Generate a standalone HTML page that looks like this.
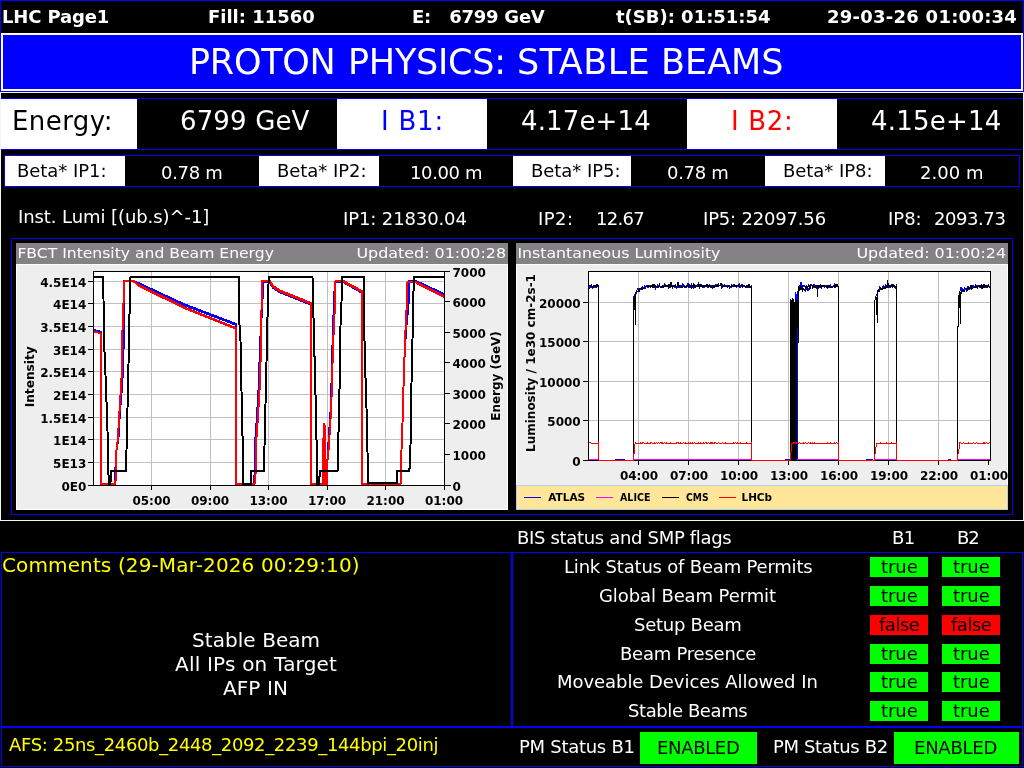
<!DOCTYPE html>
<html><head><meta charset="utf-8"><title>LHC Page1</title>
<style>
html,body{margin:0;padding:0;background:#000;}
body{width:1024px;height:768px;position:relative;overflow:hidden;font-family:"DejaVu Sans","Liberation Sans",sans-serif;}
.b{position:absolute;box-sizing:border-box;}
.t{position:absolute;white-space:pre;will-change:transform;}
svg{position:absolute;overflow:hidden;}
svg text{font-family:"DejaVu Sans","Liberation Sans",sans-serif;}
</style></head><body>

<div class="b" style="left:0px;top:0px;width:1024px;height:92px;border:1px solid #0000ff;"></div>
<span class="t" style="left:2px;top:8px;font-size:18px;line-height:18px;color:#fff;letter-spacing:-0.144px;font-weight:bold;">LHC Page1</span>
<span class="t" style="left:208px;top:8px;font-size:18px;line-height:18px;color:#fff;letter-spacing:-0.020px;font-weight:bold;">Fill: 11560</span>
<span class="t" style="left:412px;top:8px;font-size:18px;line-height:18px;color:#fff;letter-spacing:-0.232px;font-weight:bold;">E:   6799 GeV</span>
<span class="t" style="left:616px;top:8px;font-size:18px;line-height:18px;color:#fff;letter-spacing:-0.012px;font-weight:bold;">t(SB): 01:51:54</span>
<span class="t" style="left:827px;top:8px;font-size:18px;line-height:18px;color:#fff;letter-spacing:0.250px;font-weight:bold;">29-03-26 01:00:34</span>
<div class="b" style="left:1px;top:33px;width:1022px;height:58px;background:#0000ff;border:2px solid #fff;"></div>
<div>
<span class="t" style="left:189px;top:45px;font-size:35px;line-height:35px;color:#fff;letter-spacing:-0.262px;">PROTON</span>
<span class="t" style="left:348px;top:45px;font-size:35px;line-height:35px;color:#fff;letter-spacing:-0.252px;">PHYSICS:</span>
<span class="t" style="left:517px;top:45px;font-size:35px;line-height:35px;color:#fff;letter-spacing:0.450px;">STABLE</span>
<span class="t" style="left:661px;top:45px;font-size:35px;line-height:35px;color:#fff;">BEAMS</span>
</div>
<div class="b" style="left:0px;top:92px;width:1024px;height:429px;border:1px solid #f4f4f4;"></div>
<div class="b" style="left:1px;top:98px;width:1022px;height:52px;border:1px solid #0000ff;border-left:none;border-right:none;"></div>
<div class="b" style="left:1px;top:99px;width:136px;height:50px;background:#fff;"></div>
<div class="b" style="left:337px;top:99px;width:150px;height:50px;background:#fff;"></div>
<div class="b" style="left:687px;top:99px;width:150px;height:50px;background:#fff;"></div>
<span class="t" style="left:12px;top:108px;font-size:26px;line-height:26px;color:#000;letter-spacing:0.435px;">Energy:</span>
<span class="t" style="left:180px;top:108px;font-size:26px;line-height:26px;color:#fff;letter-spacing:0.144px;">6799 GeV</span>
<span class="t" style="left:381px;top:108px;font-size:26px;line-height:26px;color:#0000ff;letter-spacing:0.778px;">I B1:</span>
<span class="t" style="left:521px;top:108px;font-size:26px;line-height:26px;color:#fff;letter-spacing:0.134px;">4.17e+14</span>
<span class="t" style="left:731px;top:108px;font-size:26px;line-height:26px;color:#ff0000;letter-spacing:0.653px;">I B2:</span>
<span class="t" style="left:871px;top:108px;font-size:26px;line-height:26px;color:#fff;letter-spacing:0.205px;">4.15e+14</span>
<div class="b" style="left:4px;top:155px;width:1016px;height:32px;border:1px solid #0000ff;"></div>
<div class="b" style="left:5px;top:156px;width:120px;height:30px;background:#fff;"></div>
<span class="t" style="left:17px;top:162px;font-size:18px;line-height:18px;color:#000;letter-spacing:-0.051px;">Beta* IP1:</span>
<span class="t" style="left:161px;top:164px;font-size:18px;line-height:18px;color:#fff;letter-spacing:-0.302px;">0.78 m</span>
<div class="b" style="left:259px;top:156px;width:120px;height:30px;background:#fff;"></div>
<span class="t" style="left:277px;top:162px;font-size:18px;line-height:18px;color:#000;letter-spacing:-0.051px;">Beta* IP2:</span>
<span class="t" style="left:410px;top:164px;font-size:18px;line-height:18px;color:#fff;letter-spacing:-0.369px;">10.00 m</span>
<div class="b" style="left:513px;top:156px;width:118px;height:30px;background:#fff;"></div>
<span class="t" style="left:531px;top:162px;font-size:18px;line-height:18px;color:#000;letter-spacing:-0.051px;">Beta* IP5:</span>
<span class="t" style="left:667px;top:164px;font-size:18px;line-height:18px;color:#fff;letter-spacing:-0.302px;">0.78 m</span>
<div class="b" style="left:765px;top:156px;width:120px;height:30px;background:#fff;"></div>
<span class="t" style="left:783px;top:162px;font-size:18px;line-height:18px;color:#000;letter-spacing:-0.051px;">Beta* IP8:</span>
<span class="t" style="left:920px;top:164px;font-size:18px;line-height:18px;color:#fff;letter-spacing:0.016px;">2.00 m</span>
<span class="t" style="left:18px;top:208px;font-size:18px;line-height:18px;color:#fff;letter-spacing:-0.082px;">Inst. Lumi [(ub.s)^-1]</span>
<span class="t" style="left:343px;top:210px;font-size:18px;line-height:18px;color:#fff;letter-spacing:-0.119px;">IP1: 21830.04</span>
<div>
<span class="t" style="left:538px;top:210px;font-size:18px;line-height:18px;color:#fff;letter-spacing:0.427px;">IP2:</span>
<span class="t" style="left:596px;top:210px;font-size:18px;line-height:18px;color:#fff;letter-spacing:-0.705px;">12.67</span>
</div>
<span class="t" style="left:703px;top:210px;font-size:18px;line-height:18px;color:#fff;letter-spacing:-0.183px;">IP5: 22097.56</span>
<div>
<span class="t" style="left:888px;top:210px;font-size:18px;line-height:18px;color:#fff;">IP8:</span>
<span class="t" style="left:934px;top:210px;font-size:18px;line-height:18px;color:#fff;letter-spacing:-0.434px;">2093.73</span>
</div>
<div class="b" style="left:11px;top:238px;width:1002px;height:277px;border:1px solid #0000ff;"></div>
<svg style="left:16px;top:243px;will-change:transform" width="492" height="267" viewBox="16 243 492 267" shape-rendering="crispEdges">
<rect x="16" y="243" width="492" height="267" fill="#fff"/>
<rect x="17" y="265" width="490" height="244" fill="#eeeeee"/>
<rect x="16" y="243" width="492" height="21" fill="#848284"/>
<text x="17.4" y="258" font-size="14" font-weight="normal" text-anchor="start" fill="#fff" textLength="256.5" lengthAdjust="spacingAndGlyphs">FBCT Intensity and Beam Energy</text>
<text x="356.4" y="258" font-size="14" font-weight="normal" text-anchor="start" fill="#fff" textLength="149.7" lengthAdjust="spacingAndGlyphs">Updated: 01:00:28</text>
<rect x="93" y="271" width="351" height="214" fill="#fff"/>
<rect x="151" y="271" width="1" height="214" fill="#c0c0c0"/>
<rect x="210" y="271" width="1" height="214" fill="#c0c0c0"/>
<rect x="268" y="271" width="1" height="214" fill="#c0c0c0"/>
<rect x="327" y="271" width="1" height="214" fill="#c0c0c0"/>
<rect x="385" y="271" width="1" height="214" fill="#c0c0c0"/>
<rect x="93" y="462" width="351" height="1" fill="#c0c0c0"/>
<rect x="93" y="439" width="351" height="1" fill="#c0c0c0"/>
<rect x="93" y="417" width="351" height="1" fill="#c0c0c0"/>
<rect x="93" y="394" width="351" height="1" fill="#c0c0c0"/>
<rect x="93" y="371" width="351" height="1" fill="#c0c0c0"/>
<rect x="93" y="349" width="351" height="1" fill="#c0c0c0"/>
<rect x="93" y="326" width="351" height="1" fill="#c0c0c0"/>
<rect x="93" y="303" width="351" height="1" fill="#c0c0c0"/>
<rect x="93" y="281" width="351" height="1" fill="#c0c0c0"/>
<clipPath id="c1"><rect x="93" y="271" width="352" height="215"/></clipPath>
<g clip-path="url(#c1)">
<polyline points="93.0,329.5 101.0,332.0 101.0,484.0 114.5,484.0 116.5,450.0 118.5,437.0 120.0,411.0 122.0,387.0 123.0,369.0 124.0,330.0 124.5,281.0 134.0,281.0 184.0,304.2 236.0,324.0 236.0,484.0 253.5,484.0 254.5,475.0 255.5,437.0 256.5,423.0 258.0,400.0 259.0,380.0 260.0,345.0 262.5,300.0 263.0,282.0 270.0,282.0 273.0,287.0 280.0,291.5 311.0,304.0 311.0,484.0 322.6,484.0 323.5,438.0 324.5,423.0 325.3,484.0 326.4,484.0 327.4,461.0 328.0,450.0 329.0,435.0 330.5,412.0 331.5,383.0 332.5,345.0 334.0,300.0 335.0,281.5 343.5,281.5 362.0,292.0 362.0,484.0 400.5,484.0 401.5,450.0 402.5,423.0 403.5,387.0 404.5,357.0 406.0,330.0 408.5,305.0 409.0,281.0 416.0,281.0 444.0,294.0" fill="none" stroke="#0000ff" stroke-width="2" stroke-linejoin="miter"/>
<polyline points="134.0,281.8 184.0,305.0 236.0,324.8" fill="none" stroke="#0000ff" stroke-width="2" stroke-linejoin="miter"/>
<polyline points="270.0,282.8 273.0,287.8 280.0,292.3 311.0,304.8" fill="none" stroke="#0000ff" stroke-width="2" stroke-linejoin="miter"/>
<polyline points="343.5,282.3 362.0,292.8" fill="none" stroke="#0000ff" stroke-width="2" stroke-linejoin="miter"/>
<polyline points="416.0,281.8 444.0,294.8" fill="none" stroke="#0000ff" stroke-width="2" stroke-linejoin="miter"/>
<polyline points="93.0,331.0 101.0,333.5 101.0,484.0 115.4,484.0 116.5,450.0 118.0,437.6 119.5,411.0 121.0,387.0 122.0,369.0 122.5,330.0 123.0,315.0 124.0,292.0 124.5,281.0 134.0,281.0 139.0,285.0 184.0,307.2 236.0,328.0 236.0,484.0 254.5,484.0 255.5,475.0 256.5,437.0 257.5,423.0 259.0,400.0 260.0,380.0 261.0,345.0 261.5,310.0 262.0,281.0 270.0,281.0 273.0,286.0 280.0,290.5 311.0,303.0 311.0,484.0 322.6,484.0 323.5,438.0 324.5,423.0 325.3,484.0 327.0,484.0 327.4,461.0 328.5,450.0 329.5,435.0 331.0,412.0 332.0,383.0 333.0,345.0 334.5,315.0 335.5,281.0 343.5,281.0 362.0,291.0 362.0,484.0 400.5,484.0 401.5,450.0 402.5,423.0 403.5,387.0 404.5,357.0 405.5,330.0 407.0,300.0 407.5,282.0 416.0,282.0 444.0,296.0" fill="none" stroke="#ff0000" stroke-width="2" stroke-linejoin="miter"/>
<polyline points="134.0,281.8 139.0,285.8 184.0,308.0 236.0,328.8" fill="none" stroke="#ff0000" stroke-width="2" stroke-linejoin="miter"/>
<polyline points="270.0,281.8 273.0,286.8 280.0,291.3 311.0,303.8" fill="none" stroke="#ff0000" stroke-width="2" stroke-linejoin="miter"/>
<polyline points="343.5,281.8 362.0,291.8" fill="none" stroke="#ff0000" stroke-width="2" stroke-linejoin="miter"/>
<polyline points="416.0,282.8 444.0,296.8" fill="none" stroke="#ff0000" stroke-width="2" stroke-linejoin="miter"/>
<polyline points="93.0,277.0 103.0,277.0 103.5,299.0 104.0,340.0 106.0,387.0 107.5,431.0 108.5,475.0 109.0,484.0 110.5,484.0 110.6,471.0 126.0,471.0 126.5,450.0 127.5,408.0 128.5,364.0 129.3,321.0 130.2,290.0 130.5,277.0 238.8,277.0 239.0,322.0 240.3,330.0 241.0,368.0 242.0,413.0 243.0,457.0 243.5,484.0 251.0,484.0 251.2,471.0 264.0,471.0 264.5,446.0 265.5,404.0 266.5,362.0 267.5,318.0 268.5,285.0 268.6,277.0 312.4,277.0 313.0,284.0 313.7,330.0 315.0,372.0 316.0,416.0 317.0,462.0 317.5,484.0 319.4,484.0 319.6,471.0 337.5,471.0 338.0,454.0 339.0,411.0 340.0,368.0 340.5,326.0 342.0,290.0 342.2,277.0 363.9,277.0 364.0,318.0 365.0,363.0 366.5,408.0 367.5,452.0 368.0,483.0 396.7,483.0 397.0,471.0 409.3,471.0 410.0,463.0 411.0,427.0 411.5,383.0 412.5,340.0 413.0,298.0 414.0,285.0 414.1,277.0 444.0,277.0" fill="none" stroke="#000" stroke-width="2" stroke-linejoin="miter"/>
</g>
<rect x="93" y="271" width="357" height="1" fill="#000"/>
<rect x="93" y="271" width="1" height="215" fill="#000"/>
<rect x="88" y="485" width="363" height="1" fill="#000"/>
<rect x="444" y="271" width="1" height="215" fill="#000"/>
<rect x="88" y="485" width="5" height="1" fill="#000"/>
<text x="86.3" y="491" font-size="12" font-weight="bold" text-anchor="end" fill="#000">0E0</text>
<rect x="88" y="462" width="5" height="1" fill="#000"/>
<text x="86.3" y="468" font-size="12" font-weight="bold" text-anchor="end" fill="#000">5E13</text>
<rect x="88" y="439" width="5" height="1" fill="#000"/>
<text x="86.3" y="445" font-size="12" font-weight="bold" text-anchor="end" fill="#000">1E14</text>
<rect x="88" y="417" width="5" height="1" fill="#000"/>
<text x="86.3" y="423" font-size="12" font-weight="bold" text-anchor="end" fill="#000">1.5E14</text>
<rect x="88" y="394" width="5" height="1" fill="#000"/>
<text x="86.3" y="400" font-size="12" font-weight="bold" text-anchor="end" fill="#000">2E14</text>
<rect x="88" y="371" width="5" height="1" fill="#000"/>
<text x="86.3" y="377" font-size="12" font-weight="bold" text-anchor="end" fill="#000">2.5E14</text>
<rect x="88" y="349" width="5" height="1" fill="#000"/>
<text x="86.3" y="355" font-size="12" font-weight="bold" text-anchor="end" fill="#000">3E14</text>
<rect x="88" y="326" width="5" height="1" fill="#000"/>
<text x="86.3" y="332" font-size="12" font-weight="bold" text-anchor="end" fill="#000">3.5E14</text>
<rect x="88" y="303" width="5" height="1" fill="#000"/>
<text x="86.3" y="309" font-size="12" font-weight="bold" text-anchor="end" fill="#000">4E14</text>
<rect x="88" y="281" width="5" height="1" fill="#000"/>
<text x="86.3" y="287" font-size="12" font-weight="bold" text-anchor="end" fill="#000">4.5E14</text>
<text x="452.5" y="491" font-size="12" font-weight="bold" text-anchor="start" fill="#000">0</text>
<rect x="445" y="454" width="5" height="1" fill="#000"/>
<text x="452.5" y="460" font-size="12" font-weight="bold" text-anchor="start" fill="#000">1000</text>
<rect x="445" y="423" width="5" height="1" fill="#000"/>
<text x="452.5" y="429" font-size="12" font-weight="bold" text-anchor="start" fill="#000">2000</text>
<rect x="445" y="393" width="5" height="1" fill="#000"/>
<text x="452.5" y="399" font-size="12" font-weight="bold" text-anchor="start" fill="#000">3000</text>
<rect x="445" y="362" width="5" height="1" fill="#000"/>
<text x="452.5" y="368" font-size="12" font-weight="bold" text-anchor="start" fill="#000">4000</text>
<rect x="445" y="332" width="5" height="1" fill="#000"/>
<text x="452.5" y="338" font-size="12" font-weight="bold" text-anchor="start" fill="#000">5000</text>
<rect x="445" y="301" width="5" height="1" fill="#000"/>
<text x="452.5" y="307" font-size="12" font-weight="bold" text-anchor="start" fill="#000">6000</text>
<text x="452.5" y="277" font-size="12" font-weight="bold" text-anchor="start" fill="#000">7000</text>
<rect x="151" y="486" width="1" height="4" fill="#000"/>
<text x="151.5" y="505" font-size="12" font-weight="bold" text-anchor="middle" fill="#000">05:00</text>
<rect x="210" y="486" width="1" height="4" fill="#000"/>
<text x="210.0" y="505" font-size="12" font-weight="bold" text-anchor="middle" fill="#000">09:00</text>
<rect x="268" y="486" width="1" height="4" fill="#000"/>
<text x="268.5" y="505" font-size="12" font-weight="bold" text-anchor="middle" fill="#000">13:00</text>
<rect x="327" y="486" width="1" height="4" fill="#000"/>
<text x="327.0" y="505" font-size="12" font-weight="bold" text-anchor="middle" fill="#000">17:00</text>
<rect x="385" y="486" width="1" height="4" fill="#000"/>
<text x="385.5" y="505" font-size="12" font-weight="bold" text-anchor="middle" fill="#000">21:00</text>
<rect x="444" y="486" width="1" height="4" fill="#000"/>
<text x="444.0" y="505" font-size="12" font-weight="bold" text-anchor="middle" fill="#000">01:00</text>
<text x="0" y="0" font-size="12" font-weight="bold" text-anchor="start" fill="#000" textLength="61" lengthAdjust="spacingAndGlyphs" transform="translate(34.3,407.3) rotate(-90)">Intensity</text>
<text x="0" y="0" font-size="12" font-weight="bold" text-anchor="middle" fill="#000" transform="translate(500,376) rotate(-90)">Energy (GeV)</text>
</svg>
<svg style="left:516px;top:243px;will-change:transform" width="492" height="267" viewBox="516 243 492 267" shape-rendering="crispEdges">
<rect x="516" y="243" width="492" height="267" fill="#fff"/>
<rect x="517" y="265" width="490" height="244" fill="#eeeeee"/>
<rect x="516" y="243" width="492" height="21" fill="#848284"/>
<text x="517.4" y="258" font-size="14" font-weight="normal" text-anchor="start" fill="#fff" textLength="203" lengthAdjust="spacingAndGlyphs">Instantaneous Luminosity</text>
<text x="856.4" y="258" font-size="14" font-weight="normal" text-anchor="start" fill="#fff" textLength="149.7" lengthAdjust="spacingAndGlyphs">Updated: 01:00:24</text>
<rect x="588" y="271" width="402" height="189" fill="#fff"/>
<rect x="638" y="271" width="1" height="189" fill="#c0c0c0"/>
<rect x="688" y="271" width="1" height="189" fill="#c0c0c0"/>
<rect x="738" y="271" width="1" height="189" fill="#c0c0c0"/>
<rect x="788" y="271" width="1" height="189" fill="#c0c0c0"/>
<rect x="838" y="271" width="1" height="189" fill="#c0c0c0"/>
<rect x="888" y="271" width="1" height="189" fill="#c0c0c0"/>
<rect x="938" y="271" width="1" height="189" fill="#c0c0c0"/>
<rect x="588" y="420" width="402" height="1" fill="#c0c0c0"/>
<rect x="588" y="381" width="402" height="1" fill="#c0c0c0"/>
<rect x="588" y="341" width="402" height="1" fill="#c0c0c0"/>
<rect x="588" y="302" width="402" height="1" fill="#c0c0c0"/>
<clipPath id="c2"><rect x="588" y="271" width="403" height="190"/></clipPath>
<g clip-path="url(#c2)">
<polyline points="588.0,287.0 588.0,287.7 588.5,285.5 589.0,286.6 589.5,287.4 590.0,288.4 590.5,286.2 591.0,285.1 591.5,284.7 592.0,287.6 592.5,288.0 593.0,287.3 593.5,286.8 594.0,287.9 594.5,286.4 595.0,284.7 595.5,287.1 596.0,287.8 596.5,286.0 597.0,284.6 597.5,285.2 598.0,284.7 598.5,286.0 598.5,460.6 615.0,460.6 615.0,459.5 624.0,459.5 624.0,460.6 633.5,460.6 633.5,298.0 634.5,295.0 636.0,294.0 636.5,290.9 637.0,290.0 637.5,288.9 638.0,289.2 638.5,288.6 639.0,289.3 639.5,288.5 640.0,290.2 640.5,289.0 641.0,290.0 641.5,288.9 642.0,288.7 642.5,288.6 643.0,286.6 643.5,289.0 644.0,287.1 644.5,286.3 645.0,288.9 645.5,287.5 646.0,287.0 646.5,285.4 647.0,285.5 647.5,286.6 648.0,288.2 648.5,286.3 649.0,285.2 649.5,285.8 650.0,285.3 650.5,286.6 651.0,287.3 651.5,285.9 652.0,285.8 652.5,284.8 653.0,287.7 653.5,286.2 654.0,287.4 654.5,285.5 655.0,285.9 655.5,287.7 656.0,285.8 656.5,286.9 657.0,286.1 657.5,284.6 658.0,287.6 658.5,287.3 659.0,285.4 659.5,285.1 660.0,286.8 660.5,286.9 661.0,287.0 661.5,286.4 662.0,287.1 662.5,287.5 663.0,285.6 663.5,285.4 664.0,286.8 664.5,284.8 665.0,286.5 665.5,285.3 666.0,284.6 666.5,286.1 667.0,286.7 667.5,286.1 668.0,285.4 668.5,286.9 669.0,284.7 669.5,286.8 670.0,285.4 670.5,287.6 671.0,284.7 671.5,285.9 672.0,285.2 672.5,287.0 673.0,285.3 673.5,285.6 674.0,285.3 674.5,287.0 675.0,287.6 675.5,285.2 676.0,285.9 676.5,287.6 677.0,285.9 677.5,287.7 678.0,284.8 678.5,285.9 679.0,287.4 679.5,287.8 680.0,285.7 680.5,287.6 681.0,284.7 681.5,285.8 682.0,285.7 682.5,284.6 683.0,285.7 683.5,285.0 684.0,285.3 684.5,287.2 685.0,286.0 685.5,286.1 686.0,287.5 686.5,285.8 687.0,284.7 687.5,287.2 688.0,283.1 688.5,287.5 689.0,287.0 689.5,285.7 690.0,287.7 690.5,285.4 691.0,285.6 691.5,284.6 692.0,287.5 692.5,285.5 693.0,286.1 693.5,287.7 694.0,285.4 694.5,286.2 695.0,285.2 695.5,287.0 696.0,287.1 696.5,285.6 697.0,285.8 697.5,284.9 698.0,287.0 698.5,281.9 699.0,285.6 699.5,287.4 700.0,285.4 700.5,284.9 701.0,286.9 701.5,285.3 702.0,286.6 702.5,287.0 703.0,286.7 703.5,287.3 704.0,286.4 704.5,287.0 705.0,285.4 705.5,285.1 706.0,286.5 706.5,285.9 707.0,286.2 707.5,287.2 708.0,287.8 708.5,286.1 709.0,287.3 709.5,284.7 710.0,285.0 710.5,287.7 711.0,287.6 711.5,287.4 712.0,285.4 712.5,287.6 713.0,286.5 713.5,285.3 714.0,285.1 714.5,285.4 715.0,286.7 715.5,284.6 716.0,286.8 716.5,285.6 717.0,287.1 717.5,284.8 718.0,285.9 718.5,286.6 719.0,285.1 719.5,285.9 720.0,285.6 720.5,285.6 721.0,285.7 721.5,287.4 722.0,285.8 722.5,286.9 723.0,284.6 723.5,286.0 724.0,285.9 724.5,286.1 725.0,284.6 725.5,286.7 726.0,284.9 726.5,285.8 727.0,285.1 727.5,286.3 728.0,284.9 728.5,287.2 729.0,285.2 729.5,287.6 730.0,286.1 730.5,287.6 731.0,287.5 731.5,287.2 732.0,287.1 732.5,285.9 733.0,287.3 733.5,285.3 734.0,286.3 734.5,285.0 735.0,286.9 735.5,284.7 736.0,287.0 736.5,287.3 737.0,286.5 737.5,286.6 738.0,285.9 738.5,286.0 739.0,286.0 739.5,284.7 740.0,286.2 740.5,287.0 741.0,286.1 741.5,286.1 742.0,285.0 742.5,284.9 743.0,286.2 743.5,286.6 744.0,286.9 744.5,286.2 745.0,286.2 745.5,287.6 746.0,287.3 746.5,286.9 747.0,285.2 747.5,286.2 748.0,287.5 748.5,287.1 749.0,284.8 749.5,287.0 750.0,287.5 750.5,287.2 751.0,286.2 751.2,286.0 751.2,460.6 785.0,460.6 785.0,459.5 790.0,459.5 790.0,460.6 795.8,460.6 795.8,292.0 796.4,298.0 796.8,460.6 797.0,460.6 797.0,300.0 798.5,286.0 799.0,289.9 799.5,285.4 800.0,290.5 800.5,285.6 801.0,282.1 801.5,289.9 802.0,290.0 802.5,286.7 803.0,285.6 803.5,286.2 804.0,285.4 804.5,286.7 805.0,287.2 805.5,290.8 806.0,290.1 806.5,285.2 807.0,287.6 807.5,287.1 808.0,288.2 808.5,290.2 809.0,289.9 809.5,285.0 810.0,289.6 810.5,284.5 811.0,286.2 811.5,285.1 812.0,285.7 812.5,285.4 813.0,285.5 813.5,286.9 814.0,284.9 814.5,284.8 815.0,286.9 815.5,286.6 816.0,285.9 816.5,287.5 817.0,285.5 817.5,285.4 818.0,286.2 818.5,287.5 819.0,286.1 819.5,287.1 820.0,286.7 820.5,285.6 821.0,287.4 821.5,287.0 822.0,286.0 822.5,286.5 823.0,286.1 823.5,285.3 824.0,285.5 824.5,287.4 825.0,285.0 825.5,285.6 826.0,285.0 826.5,285.1 827.0,287.0 827.5,287.8 828.0,285.8 828.5,287.2 829.0,286.0 829.5,286.7 830.0,285.2 830.5,284.6 831.0,287.2 831.5,286.2 832.0,286.1 832.5,286.6 833.0,287.0 833.5,286.0 834.0,287.0 834.5,285.3 835.0,287.5 835.5,286.9 836.0,286.8 836.5,286.0 837.0,286.6 837.5,285.9 838.0,286.9 838.4,286.0 838.4,460.6 866.0,460.6 866.0,459.5 872.0,459.5 872.0,460.6 874.7,460.6 874.7,343.0 875.0,300.0 876.0,296.0 878.0,292.5 878.5,289.8 879.0,289.5 879.5,287.2 880.0,288.1 880.5,287.9 881.0,288.2 881.5,288.9 882.0,289.9 882.5,285.9 883.0,289.5 883.5,286.1 884.0,286.6 884.5,289.4 885.0,286.3 885.5,285.0 886.0,287.1 886.5,285.0 887.0,287.2 887.5,287.5 888.0,287.2 888.5,287.5 889.0,287.4 889.5,286.9 890.0,287.0 890.5,287.5 891.0,285.4 891.5,285.0 892.0,284.7 892.5,285.0 893.0,286.2 893.5,283.8 894.0,286.1 894.5,286.8 895.0,285.8 895.5,287.8 896.0,286.7 896.5,284.6 896.7,286.0 896.7,460.6 948.0,460.6 948.0,459.5 950.0,459.5 950.0,460.6 957.8,460.6 957.8,336.0 958.6,297.0 961.0,286.9 961.5,292.8 962.0,290.4 962.5,289.4 963.0,290.3 963.5,289.5 964.0,289.5 964.5,288.1 965.0,288.7 965.5,289.5 966.0,288.3 966.5,290.4 967.0,288.7 967.5,286.5 968.0,288.9 968.5,287.3 969.0,289.7 969.5,288.1 970.0,287.3 970.5,287.0 971.0,287.8 971.5,288.5 972.0,285.2 972.5,286.8 973.0,288.3 973.5,285.2 974.0,288.2 974.5,287.2 975.0,288.3 975.5,287.0 976.0,285.9 976.5,286.6 977.0,285.4 977.5,287.9 978.0,286.8 978.5,286.3 979.0,285.6 979.5,287.4 980.0,285.0 980.5,287.3 981.0,286.7 981.5,287.7 982.0,286.3 982.5,285.3 983.0,285.3 983.5,285.9 984.0,286.1 984.5,285.2 985.0,288.1 985.5,285.1 986.0,287.4 986.5,286.7 987.0,284.9 987.5,288.1 988.0,286.4 988.5,285.6 989.0,286.1 989.5,287.3 990.0,288.0" fill="none" stroke="#0000ff" stroke-width="1" stroke-linejoin="miter"/>
<rect x="588.0" y="459" width="10.5" height="1" fill="#ff00ff"/>
<rect x="633.5" y="459" width="117.7" height="1" fill="#ff00ff"/>
<rect x="790.0" y="459" width="48.4" height="1" fill="#ff00ff"/>
<rect x="874.7" y="459" width="22.0" height="1" fill="#ff00ff"/>
<rect x="957.8" y="459" width="32.2" height="1" fill="#ff00ff"/>
<polyline points="588.0,286.0 588.0,285.8 588.5,286.7 589.0,286.4 589.5,285.2 590.0,285.1 590.5,285.2 591.0,286.1 591.5,285.3 592.0,286.6 592.5,286.5 593.0,287.5 593.5,287.2 594.0,285.4 594.5,285.8 595.0,285.5 595.5,286.7 596.0,286.4 596.5,285.2 597.0,286.8 597.5,285.8 598.0,286.2 598.5,286.0 598.5,460.6 633.5,460.6 633.5,300.0 634.5,296.0 635.5,324.6 635.7,294.0 636.0,292.1 636.5,292.1 637.0,290.8 637.5,291.4 638.0,291.5 638.5,289.8 639.0,289.6 639.5,290.7 640.0,288.5 640.5,288.3 641.0,288.9 641.5,287.3 642.0,287.9 642.5,289.1 643.0,287.9 643.5,288.1 644.0,288.5 644.5,288.3 645.0,287.1 645.5,286.3 646.0,286.1 646.5,286.3 647.0,286.6 647.5,285.7 648.0,285.9 648.5,285.6 649.0,287.0 649.5,286.1 650.0,286.3 650.5,287.4 651.0,286.5 651.5,285.5 652.0,286.1 652.5,287.0 653.0,285.3 653.5,286.4 654.0,283.6 654.5,287.4 655.0,286.7 655.5,286.0 656.0,286.9 656.5,286.9 657.0,285.7 657.5,287.4 658.0,287.0 658.5,286.8 659.0,286.3 659.5,283.1 660.0,285.8 660.5,287.3 661.0,287.3 661.5,287.3 662.0,285.7 662.5,285.6 663.0,286.6 663.5,287.0 664.0,286.6 664.5,285.4 665.0,287.2 665.5,286.9 666.0,285.6 666.5,285.9 667.0,287.3 667.5,286.1 668.0,286.8 668.5,285.5 669.0,287.2 669.5,285.5 670.0,287.4 670.5,286.0 671.0,281.6 671.5,286.6 672.0,287.3 672.5,287.1 673.0,285.7 673.5,285.8 674.0,286.5 674.5,286.1 675.0,287.2 675.5,286.2 676.0,287.2 676.5,287.2 677.0,286.4 677.5,285.2 678.0,282.1 678.5,285.6 679.0,286.8 679.5,285.9 680.0,286.4 680.5,285.4 681.0,285.7 681.5,286.9 682.0,286.4 682.5,287.2 683.0,286.5 683.5,286.3 684.0,286.2 684.5,286.3 685.0,286.7 685.5,287.3 686.0,286.4 686.5,287.0 687.0,285.5 687.5,285.4 688.0,285.4 688.5,286.9 689.0,285.5 689.5,286.7 690.0,287.1 690.5,285.7 691.0,286.1 691.5,287.4 692.0,285.6 692.5,286.3 693.0,285.6 693.5,283.9 694.0,283.8 694.5,286.6 695.0,285.3 695.5,286.9 696.0,285.4 696.5,285.3 697.0,285.8 697.5,286.1 698.0,287.0 698.5,285.5 699.0,286.5 699.5,285.4 700.0,286.7 700.5,285.4 701.0,286.6 701.5,285.4 702.0,285.3 702.5,286.2 703.0,286.4 703.5,285.8 704.0,286.4 704.5,285.4 705.0,285.3 705.5,285.9 706.0,286.9 706.5,286.3 707.0,283.8 707.5,285.2 708.0,286.4 708.5,286.2 709.0,285.4 709.5,286.2 710.0,287.0 710.5,286.3 711.0,287.4 711.5,287.0 712.0,286.6 712.5,286.0 713.0,285.5 713.5,286.8 714.0,285.6 714.5,287.1 715.0,286.7 715.5,285.7 716.0,286.2 716.5,286.2 717.0,287.3 717.5,286.4 718.0,287.3 718.5,283.5 719.0,286.2 719.5,285.6 720.0,285.2 720.5,285.4 721.0,283.0 721.5,285.7 722.0,286.4 722.5,286.6 723.0,287.1 723.5,285.9 724.0,285.5 724.5,286.6 725.0,287.0 725.5,286.6 726.0,287.0 726.5,286.4 727.0,287.0 727.5,287.0 728.0,287.2 728.5,286.7 729.0,285.3 729.5,286.0 730.0,287.0 730.5,286.6 731.0,286.7 731.5,285.2 732.0,286.8 732.5,286.4 733.0,285.3 733.5,285.8 734.0,285.8 734.5,285.7 735.0,287.3 735.5,286.0 736.0,286.7 736.5,286.6 737.0,285.4 737.5,285.8 738.0,285.9 738.5,285.2 739.0,285.8 739.5,286.7 740.0,285.8 740.5,286.2 741.0,285.5 741.5,285.6 742.0,284.6 742.5,287.0 743.0,286.2 743.5,285.7 744.0,285.7 744.5,285.5 745.0,287.3 745.5,287.0 746.0,287.2 746.5,285.7 747.0,284.8 747.5,286.3 748.0,285.9 748.5,286.0 749.0,283.7 749.5,287.0 750.0,287.2 750.5,287.2 751.0,286.0 751.2,286.0 751.2,460.6 790.0,460.6 790.0,460.6 790.0,299.2 790.5,460.6 790.5,299.6 791.0,460.6 791.0,301.0 791.5,460.6 791.5,299.9 792.0,460.6 792.0,298.2 792.5,460.6 792.5,299.1 793.0,460.6 793.0,299.0 793.5,460.6 793.5,303.6 794.0,460.6 794.0,302.1 794.5,460.6 794.5,303.4 795.0,460.6 795.0,299.0 795.5,460.6 795.5,302.7 795.5,460.6 796.5,460.6 797.0,300.0 797.6,306.0 798.3,343.0 798.5,287.0 799.0,286.6 799.5,289.2 800.0,290.4 800.5,288.9 801.0,286.5 801.5,289.1 802.0,290.0 802.5,291.0 803.0,287.8 803.5,288.2 804.0,289.7 804.5,290.1 805.0,289.2 805.5,288.9 806.0,286.0 806.5,286.7 807.0,288.2 807.5,290.5 808.0,287.1 808.5,283.7 809.0,286.5 809.5,287.1 810.0,288.9 810.5,286.8 811.0,285.6 811.5,285.8 812.0,285.4 812.5,287.5 813.0,286.2 813.5,285.2 814.0,286.7 814.5,286.9 815.0,287.6 815.5,285.8 816.0,285.3 816.5,286.3 817.0,285.4 817.6,296.5 818.0,285.1 818.5,287.4 819.0,285.6 819.5,286.3 820.0,287.1 820.5,285.8 821.0,285.2 821.5,287.0 822.0,285.1 822.5,286.9 823.0,286.9 823.5,285.6 824.0,285.7 824.5,285.9 825.0,286.8 825.5,286.8 826.0,286.4 826.5,287.0 827.0,285.7 827.5,287.4 828.0,285.1 828.5,285.7 829.0,287.4 829.5,285.9 830.0,285.9 830.5,287.3 831.0,286.8 831.5,287.4 832.0,287.1 832.5,287.2 833.0,286.8 833.5,285.8 834.0,286.6 834.5,287.3 835.0,285.2 835.5,287.3 836.0,283.8 836.5,286.8 837.0,286.8 837.5,285.3 838.0,286.0 838.4,286.0 838.4,460.6 874.7,460.6 874.7,301.5 876.0,297.0 877.5,323.4 877.7,291.0 878.0,291.3 878.5,291.1 879.0,290.3 879.5,291.3 880.0,290.0 880.5,288.8 881.0,290.3 881.5,288.7 882.0,289.2 882.5,288.2 883.0,288.2 883.5,288.5 884.0,288.1 884.5,287.6 885.0,288.8 885.5,286.9 886.0,286.3 886.5,287.0 887.0,285.7 887.3,279.6 887.8,287.5 888.3,285.2 888.8,283.5 889.3,286.1 889.8,285.9 890.3,285.6 890.8,287.4 891.3,285.6 891.8,286.0 892.3,285.4 892.8,287.0 893.3,286.2 893.8,285.6 894.3,285.9 894.8,287.1 895.3,286.2 895.8,286.4 896.3,287.1 896.7,286.0 896.7,460.6 957.8,460.6 957.8,334.0 958.8,298.0 959.6,291.0 960.4,323.6 960.6,292.0 961.0,293.5 961.5,292.0 962.0,292.0 962.5,289.4 963.0,291.5 963.5,291.8 964.0,290.4 964.5,290.9 965.0,289.7 965.5,289.7 966.0,288.7 966.5,288.8 967.0,288.3 967.5,290.0 968.0,289.3 968.5,287.9 969.0,288.5 969.5,288.9 970.0,288.6 970.5,288.0 971.0,285.2 971.5,288.8 972.0,288.0 972.5,288.6 973.0,287.7 973.5,287.9 974.0,287.8 974.5,287.7 975.0,287.9 975.5,285.8 976.0,287.3 976.5,287.0 977.0,287.4 977.5,286.7 978.0,286.1 978.5,286.2 979.0,286.9 979.5,285.5 980.0,285.5 980.5,287.3 981.0,287.6 981.5,285.4 982.0,286.8 982.5,287.8 983.0,286.4 983.5,286.9 984.0,284.3 984.5,287.0 985.0,287.7 985.5,287.5 986.0,285.4 986.5,286.0 987.0,285.8 987.5,287.3 988.0,287.5 988.5,285.6 989.0,287.1 989.5,287.6 990.0,287.7" fill="none" stroke="#000" stroke-width="1" stroke-linejoin="miter"/>
<polyline points="588.0,442.8 588.7,442.9 589.4,442.9 590.1,442.8 590.8,442.8 591.5,443.3 592.2,443.5 592.9,443.2 593.6,443.6 594.3,443.6 595.0,442.8 595.7,443.3 596.4,443.1 597.1,442.9 597.8,443.6 598.5,443.0 598.5,460.6 633.5,460.6 633.5,455.0 634.5,452.0 635.0,444.0 635.5,443.0 636.2,443.3 636.9,443.3 637.6,443.6 638.3,443.4 639.0,443.1 639.7,443.2 640.4,442.9 641.1,443.6 641.8,443.6 642.5,442.9 643.2,442.8 643.9,443.0 644.6,443.1 645.3,443.6 646.0,443.6 646.7,443.5 647.4,442.8 648.1,443.5 648.8,443.4 649.5,443.3 650.2,443.6 650.9,442.8 651.6,442.9 652.3,443.4 653.0,443.6 653.7,443.4 654.4,443.0 655.1,443.3 655.8,443.4 656.5,442.8 657.2,443.0 657.9,443.0 658.6,442.9 659.3,443.2 660.0,442.9 660.7,443.0 661.4,442.9 662.1,443.4 662.8,442.8 663.5,443.4 664.2,442.9 664.9,442.8 665.6,443.6 666.3,442.9 667.0,443.6 667.7,443.5 668.4,443.5 669.1,442.9 669.8,443.2 670.5,442.8 671.2,443.6 671.9,443.5 672.6,443.3 673.3,443.2 674.0,443.1 674.7,443.5 675.4,443.2 676.1,443.3 676.8,442.9 677.5,442.9 678.2,442.8 678.9,443.4 679.6,443.2 680.3,442.9 681.0,443.5 681.7,443.0 682.4,443.1 683.1,442.9 683.8,443.0 684.5,443.5 685.2,443.1 685.9,442.9 686.6,443.2 687.3,443.0 688.0,443.6 688.7,442.9 689.4,443.6 690.1,442.8 690.8,443.6 691.5,443.4 692.2,442.9 692.9,443.2 693.6,443.0 694.3,443.0 695.0,442.9 695.7,443.1 696.4,443.6 697.1,443.6 697.8,443.6 698.5,442.8 699.2,443.0 699.9,443.6 700.6,442.8 701.3,443.4 702.0,443.0 702.7,443.6 703.4,442.8 704.1,443.5 704.8,443.1 705.5,442.9 706.2,442.8 706.9,443.5 707.6,443.2 708.3,442.9 709.0,443.1 709.7,443.6 710.4,442.9 711.1,443.3 711.8,442.9 712.5,442.9 713.2,443.4 713.9,443.4 714.6,442.9 715.3,442.8 716.0,442.8 716.7,443.3 717.4,443.2 718.1,443.0 718.8,442.9 719.5,443.3 720.2,443.4 720.9,443.5 721.6,443.3 722.3,442.9 723.0,442.8 723.7,443.4 724.4,443.1 725.1,443.4 725.8,442.8 726.5,443.5 727.2,443.1 727.9,443.5 728.6,443.5 729.3,443.2 730.0,442.8 730.7,443.6 731.4,443.2 732.1,443.5 732.8,443.0 733.5,442.9 734.2,443.5 734.9,443.1 735.6,442.9 736.3,443.1 737.0,443.3 737.7,442.8 738.4,443.2 739.1,443.2 739.8,443.2 740.5,442.9 741.2,443.4 741.9,443.5 742.6,443.5 743.3,443.0 744.0,443.4 744.7,443.1 745.4,443.4 746.1,442.8 746.8,443.5 747.5,443.6 748.2,443.2 748.9,443.2 749.6,443.2 750.3,443.2 751.2,443.0 751.2,460.6 790.0,460.6 790.0,455.0 791.0,452.0 791.5,444.0 792.0,442.8 792.7,443.6 793.4,443.0 794.1,442.9 794.8,442.8 795.5,443.0 796.2,443.5 796.9,442.8 797.6,442.8 798.3,443.4 799.0,442.9 799.7,442.8 800.4,443.3 801.1,443.3 801.8,443.2 802.5,443.4 803.2,442.8 803.9,443.5 804.6,443.4 805.3,442.8 806.0,442.9 806.7,443.2 807.4,443.2 808.1,443.0 808.8,442.9 809.5,443.1 810.2,442.9 810.9,443.3 811.6,443.5 812.3,442.9 813.0,443.3 813.7,443.4 814.4,442.9 815.1,443.5 815.8,443.6 816.5,443.1 817.2,443.1 817.9,443.5 818.6,443.2 819.3,443.1 820.0,443.6 820.7,443.4 821.4,443.1 822.1,443.0 822.8,443.1 823.5,443.1 824.2,443.6 824.9,443.5 825.6,443.6 826.3,443.5 827.0,443.5 827.7,442.8 828.4,443.2 829.1,443.6 829.8,443.6 830.5,443.0 831.2,443.1 831.9,443.3 832.6,443.1 833.3,443.2 834.0,442.8 834.7,443.1 835.4,443.2 836.1,442.8 836.8,442.9 837.5,443.6 838.4,443.0 838.4,460.6 874.7,460.6 874.7,455.0 875.7,452.0 876.2,444.0 876.7,443.4 877.4,443.6 878.1,443.3 878.8,443.5 879.5,443.5 880.2,443.5 880.9,442.8 881.6,443.3 882.3,443.0 883.0,443.4 883.7,443.0 884.4,443.2 885.1,443.6 885.8,443.3 886.5,443.0 887.2,443.2 887.9,443.1 888.6,443.6 889.3,443.0 890.0,443.0 890.7,443.3 891.4,442.9 892.1,443.3 892.8,443.6 893.5,443.2 894.2,443.0 894.9,443.2 895.6,443.2 896.3,442.9 896.7,443.0 896.7,460.6 957.8,460.6 957.8,455.0 958.8,452.0 959.3,444.0 959.8,442.9 960.5,442.9 961.2,443.0 961.9,443.1 962.6,443.0 963.3,443.0 964.0,442.8 964.7,443.2 965.4,443.5 966.1,443.3 966.8,443.3 967.5,443.3 968.2,442.9 968.9,443.4 969.6,443.2 970.3,443.2 971.0,443.3 971.7,443.2 972.4,443.0 973.1,443.0 973.8,442.9 974.5,443.2 975.2,443.1 975.9,443.3 976.6,442.8 977.3,443.1 978.0,443.5 978.7,443.0 979.4,443.3 980.1,443.2 980.8,443.0 981.5,443.6 982.2,443.0 982.9,443.4 983.6,442.9 984.3,442.8 985.0,443.5 985.7,443.1 986.4,442.8 987.1,443.1 987.8,443.1 988.5,443.4 989.2,442.8 990.0,443.0" fill="none" stroke="#ff0000" stroke-width="1" stroke-linejoin="miter"/>
</g>
<rect x="588" y="271" width="403" height="1" fill="#000"/>
<rect x="588" y="271" width="1" height="190" fill="#000"/>
<rect x="990" y="271" width="1" height="190" fill="#000"/>
<rect x="583" y="460" width="408" height="1" fill="#000"/>
<rect x="598.5" y="460" width="35.0" height="1" fill="#ff0000"/>
<rect x="751.2" y="460" width="38.8" height="1" fill="#ff0000"/>
<rect x="838.4" y="460" width="36.3" height="1" fill="#ff0000"/>
<rect x="896.7" y="460" width="61.1" height="1" fill="#ff0000"/>
<rect x="583" y="460" width="5" height="1" fill="#000"/>
<text x="580.7" y="466" font-size="12" font-weight="bold" text-anchor="end" fill="#000">0</text>
<rect x="583" y="420" width="5" height="1" fill="#000"/>
<text x="580.7" y="426" font-size="12" font-weight="bold" text-anchor="end" fill="#000">5000</text>
<rect x="583" y="381" width="5" height="1" fill="#000"/>
<text x="580.7" y="387" font-size="12" font-weight="bold" text-anchor="end" fill="#000">10000</text>
<rect x="583" y="341" width="5" height="1" fill="#000"/>
<text x="580.7" y="347" font-size="12" font-weight="bold" text-anchor="end" fill="#000">15000</text>
<rect x="583" y="302" width="5" height="1" fill="#000"/>
<text x="580.7" y="308" font-size="12" font-weight="bold" text-anchor="end" fill="#000">20000</text>
<rect x="638" y="461" width="1" height="4" fill="#000"/>
<text x="639.0" y="480" font-size="12" font-weight="bold" text-anchor="middle" fill="#000">04:00</text>
<rect x="688" y="461" width="1" height="4" fill="#000"/>
<text x="689.0" y="480" font-size="12" font-weight="bold" text-anchor="middle" fill="#000">07:00</text>
<rect x="738" y="461" width="1" height="4" fill="#000"/>
<text x="739.0" y="480" font-size="12" font-weight="bold" text-anchor="middle" fill="#000">10:00</text>
<rect x="788" y="461" width="1" height="4" fill="#000"/>
<text x="789.0" y="480" font-size="12" font-weight="bold" text-anchor="middle" fill="#000">13:00</text>
<rect x="838" y="461" width="1" height="4" fill="#000"/>
<text x="839.0" y="480" font-size="12" font-weight="bold" text-anchor="middle" fill="#000">16:00</text>
<rect x="888" y="461" width="1" height="4" fill="#000"/>
<text x="889.0" y="480" font-size="12" font-weight="bold" text-anchor="middle" fill="#000">19:00</text>
<rect x="938" y="461" width="1" height="4" fill="#000"/>
<text x="939.0" y="480" font-size="12" font-weight="bold" text-anchor="middle" fill="#000">22:00</text>
<rect x="988" y="461" width="1" height="4" fill="#000"/>
<text x="989.0" y="480" font-size="12" font-weight="bold" text-anchor="middle" fill="#000">01:00</text>
<text x="0" y="0" font-size="12" font-weight="bold" text-anchor="middle" fill="#000" transform="translate(535,363) rotate(-90)">Luminosity / 1e30 cm-2s-1</text>
<rect x="516" y="485" width="492" height="25" fill="#b8cce4"/>
<rect x="517" y="486" width="490" height="23" fill="#ffe699"/>
<rect x="524" y="497" width="17" height="1" fill="#0000ff"/>
<text x="548.2" y="501" font-size="10" font-weight="bold" text-anchor="start" fill="#000" textLength="37" lengthAdjust="spacingAndGlyphs">ATLAS</text>
<rect x="596" y="497" width="17" height="1" fill="#ff00ff"/>
<text x="620" y="501" font-size="10" font-weight="bold" text-anchor="start" fill="#000" textLength="30.5" lengthAdjust="spacingAndGlyphs">ALICE</text>
<rect x="662" y="497" width="17" height="1" fill="#000"/>
<text x="686" y="501" font-size="10" font-weight="bold" text-anchor="start" fill="#000" textLength="22.5" lengthAdjust="spacingAndGlyphs">CMS</text>
<rect x="718.5" y="497" width="17" height="1" fill="#ff0000"/>
<text x="741.5" y="501" font-size="10" font-weight="bold" text-anchor="start" fill="#000" textLength="30.5" lengthAdjust="spacingAndGlyphs">LHCb</text>
</svg>
<span class="t" style="left:517px;top:529px;font-size:18px;line-height:18px;color:#fff;letter-spacing:-0.323px;">BIS status and SMP flags</span>
<span class="t" style="left:892px;top:529px;font-size:18px;line-height:18px;color:#fff;letter-spacing:-0.694px;">B1</span>
<span class="t" style="left:957px;top:529px;font-size:18px;line-height:18px;color:#fff;letter-spacing:-1.116px;">B2</span>
<div class="b" style="left:1px;top:552px;width:511px;height:175px;border:1px solid #0000ff;"></div>
<div class="b" style="left:512px;top:552px;width:511px;height:175px;border:1px solid #0000ff;"></div>
<span class="t" style="left:2px;top:555px;font-size:20px;line-height:20px;color:#ffff00;letter-spacing:0.126px;">Comments (29-Mar-2026 00:29:10)</span>
<span class="t" style="left:192px;top:630px;font-size:20px;line-height:20px;color:#fff;letter-spacing:0.061px;">Stable Beam</span>
<span class="t" style="left:175px;top:654px;font-size:20px;line-height:20px;color:#fff;letter-spacing:0.203px;">All IPs on Target</span>
<span class="t" style="left:223px;top:678px;font-size:20px;line-height:20px;color:#fff;letter-spacing:0.089px;">AFP IN</span>
<span class="t" style="left:564px;top:558px;font-size:18px;line-height:18px;color:#fff;letter-spacing:-0.197px;">Link Status of Beam Permits</span>
<div class="b" style="left:870px;top:557px;width:58px;height:20px;background:#00ff00;"></div>
<span class="t" style="left:881px;top:558px;font-size:18px;line-height:18px;color:#000;letter-spacing:-0.045px;">true</span>
<div class="b" style="left:942px;top:557px;width:58px;height:20px;background:#00ff00;"></div>
<span class="t" style="left:953px;top:558px;font-size:18px;line-height:18px;color:#000;letter-spacing:-0.045px;">true</span>
<span class="t" style="left:599px;top:587px;font-size:18px;line-height:18px;color:#fff;letter-spacing:-0.106px;">Global Beam Permit</span>
<div class="b" style="left:870px;top:586px;width:58px;height:20px;background:#00ff00;"></div>
<span class="t" style="left:881px;top:587px;font-size:18px;line-height:18px;color:#000;letter-spacing:-0.045px;">true</span>
<div class="b" style="left:942px;top:586px;width:58px;height:20px;background:#00ff00;"></div>
<span class="t" style="left:953px;top:587px;font-size:18px;line-height:18px;color:#000;letter-spacing:-0.045px;">true</span>
<span class="t" style="left:634px;top:616px;font-size:18px;line-height:18px;color:#fff;letter-spacing:-0.251px;">Setup Beam</span>
<div class="b" style="left:870px;top:615px;width:58px;height:20px;background:#ff0000;"></div>
<span class="t" style="left:879px;top:616px;font-size:18px;line-height:18px;color:#000;letter-spacing:-0.477px;">false</span>
<div class="b" style="left:942px;top:615px;width:58px;height:20px;background:#ff0000;"></div>
<span class="t" style="left:951px;top:616px;font-size:18px;line-height:18px;color:#000;letter-spacing:-0.477px;">false</span>
<span class="t" style="left:620px;top:645px;font-size:18px;line-height:18px;color:#fff;letter-spacing:-0.235px;">Beam Presence</span>
<div class="b" style="left:870px;top:644px;width:58px;height:20px;background:#00ff00;"></div>
<span class="t" style="left:881px;top:645px;font-size:18px;line-height:18px;color:#000;letter-spacing:-0.045px;">true</span>
<div class="b" style="left:942px;top:644px;width:58px;height:20px;background:#00ff00;"></div>
<span class="t" style="left:953px;top:645px;font-size:18px;line-height:18px;color:#000;letter-spacing:-0.045px;">true</span>
<span class="t" style="left:557px;top:673px;font-size:18px;line-height:18px;color:#fff;letter-spacing:-0.053px;">Moveable Devices Allowed In</span>
<div class="b" style="left:870px;top:672px;width:58px;height:20px;background:#00ff00;"></div>
<span class="t" style="left:881px;top:673px;font-size:18px;line-height:18px;color:#000;letter-spacing:-0.045px;">true</span>
<div class="b" style="left:942px;top:672px;width:58px;height:20px;background:#00ff00;"></div>
<span class="t" style="left:953px;top:673px;font-size:18px;line-height:18px;color:#000;letter-spacing:-0.045px;">true</span>
<span class="t" style="left:628px;top:702px;font-size:18px;line-height:18px;color:#fff;letter-spacing:-0.402px;">Stable Beams</span>
<div class="b" style="left:870px;top:701px;width:58px;height:20px;background:#00ff00;"></div>
<span class="t" style="left:881px;top:702px;font-size:18px;line-height:18px;color:#000;letter-spacing:-0.045px;">true</span>
<div class="b" style="left:942px;top:701px;width:58px;height:20px;background:#00ff00;"></div>
<span class="t" style="left:953px;top:702px;font-size:18px;line-height:18px;color:#000;letter-spacing:-0.045px;">true</span>
<div class="b" style="left:1px;top:727px;width:1022px;height:40px;border:1px solid #0000ff;"></div>
<span class="t" style="left:9px;top:736px;font-size:18px;line-height:18px;color:#ffff00;letter-spacing:-0.356px;">AFS: 25ns_2460b_2448_2092_2239_144bpi_20inj</span>
<span class="t" style="left:519px;top:738px;font-size:18px;line-height:18px;color:#fff;letter-spacing:-0.278px;">PM Status B1</span>
<div class="b" style="left:640px;top:732px;width:117px;height:32px;background:#00ff00;"></div>
<span class="t" style="left:657px;top:739px;font-size:18px;line-height:18px;color:#000;letter-spacing:-0.332px;">ENABLED</span>
<span class="t" style="left:773px;top:738px;font-size:18px;line-height:18px;color:#fff;letter-spacing:-0.355px;">PM Status B2</span>
<div class="b" style="left:894px;top:732px;width:125px;height:32px;background:#00ff00;"></div>
<span class="t" style="left:914px;top:739px;font-size:18px;line-height:18px;color:#000;letter-spacing:-0.248px;">ENABLED</span>
</body></html>
